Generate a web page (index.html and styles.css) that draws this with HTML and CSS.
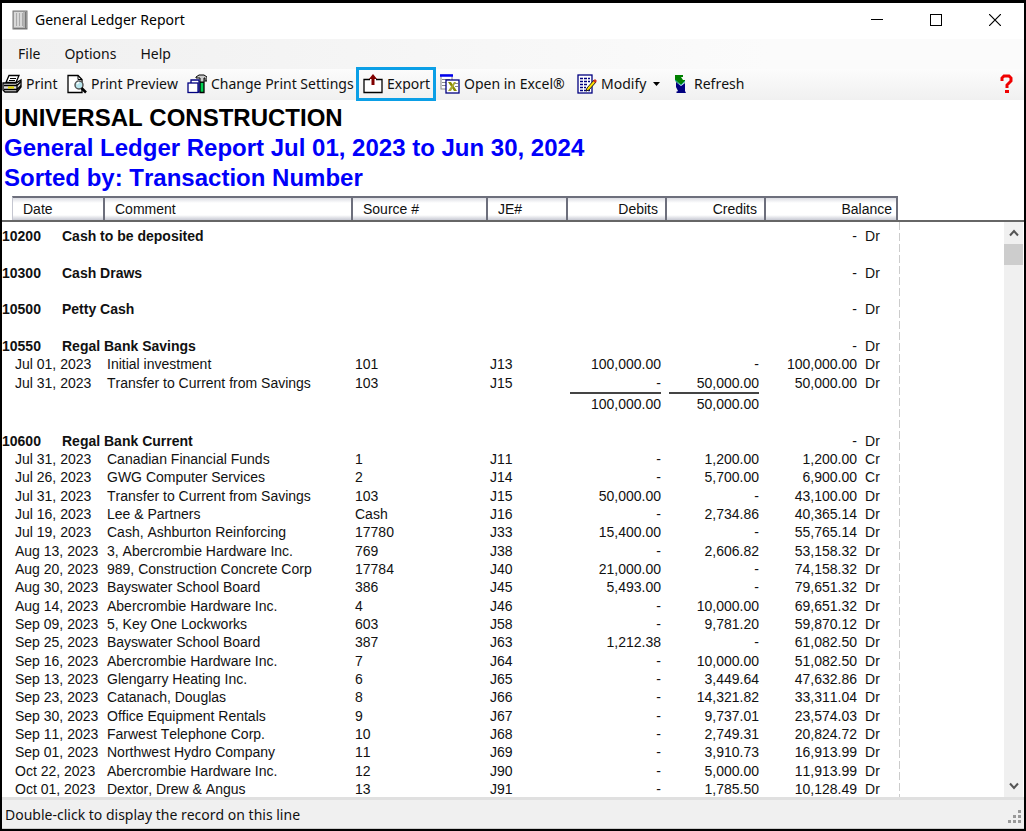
FILE: index.html
```html
<!DOCTYPE html>
<html lang="en">
<head>
  <meta charset="UTF-8" />
  <meta name="viewport" content="width=device-width, initial-scale=1" />
  <title>General Ledger Report</title>
  <link rel="stylesheet" href="styles.css">
</head>
<body>
  <div class="window">

    <header class="titlebar">
      <svg class="app-icon" width="16" height="20" viewBox="0 0 16 20">
        <rect x="1" y="1" width="14" height="18" fill="#b4b4b4" stroke="#777"/>
        <rect x="2" y="2" width="9" height="15" fill="#d8d8d8"/>
        <path d="M4.500 3v13M7.500 3v13M10.500 3v13" stroke="#aaa"/>
        <path d="M13.500 2v17M2 18.500h13" stroke="#777"/>
      </svg>
      <span class="title">General Ledger Report</span>
      <div class="window-buttons">
        <button aria-label="Minimize"><svg width="12" height="12" viewBox="0 0 12 12"><path d="M0 5.500h12" stroke="#000"/></svg></button>
        <button aria-label="Maximize"><svg width="12" height="12" viewBox="0 0 12 12"><rect x=".5" y=".5" width="11" height="11" fill="none" stroke="#000"/></svg></button>
        <button aria-label="Close"><svg width="12" height="12" viewBox="0 0 12 12"><path d="M0 0l12 12M12 0L0 12" stroke="#000" stroke-width="1.200"/></svg></button>
      </div>
    </header>

    <nav class="menubar">
      <button>File</button>
      <button>Options</button>
      <button>Help</button>
    </nav>

    <div class="toolbar">
      <button class="tool">
        <svg width="20" height="20" viewBox="0 0 20 20">
          <path d="M7 1.500h10l-3 7H4z" fill="#fff" stroke="#000" stroke-width="1.300"/>
          <path d="M8 4.500h6M7 6.500h6" stroke="#000"/>
          <path d="M1 9h13l5-3v7l-4 5H3l-2-2z" fill="#ddd" stroke="#000" stroke-width="1.300"/>
          <path d="M2 11.500h13l4-4M2 15.500h13l4-4M15 10v8" fill="none" stroke="#000" stroke-width="1.300"/>
          <path d="M6 13.500h6" stroke="#e5d800" stroke-width="2"/>
        </svg>
        Print
      </button>
      <button class="tool">
        <svg width="20" height="20" viewBox="0 0 20 20">
          <path d="M1 1.500h10l4 4V18.500H1z" fill="#fff" stroke="#000" stroke-width="1.300"/>
          <path d="M11 1.500v4h4" fill="none" stroke="#000"/>
          <circle cx="12" cy="11" r="4" fill="#b9e6ee" stroke="#555" stroke-width="1.500"/>
          <path d="M10 10l2-2" stroke="#fff" stroke-width="1.500"/>
          <path d="M14.500 14l4.500 4.500" stroke="#000" stroke-width="2.500"/>
        </svg>
        Print Preview
      </button>
      <button class="tool">
        <svg width="20" height="20" viewBox="0 0 20 20">
          <path d="M13 8h4v10.500h-4z" fill="#00d050" stroke="#000" stroke-width="1.300"/>
          <path d="M9 3l3-2h5l3 2v4h-2V4h-1v4h-4V4H9z" fill="#ccc" stroke="#000"/>
          <path d="M4 9V6h8v12h-2" fill="#fff" stroke="#000080" stroke-width="1.300"/>
          <rect x="1" y="9" width="10" height="9.500" fill="#fff" stroke="#000080" stroke-width="1.300"/>
        </svg>
        Change Print Settings
      </button>
      <button class="tool export">
        <svg width="20" height="20" viewBox="0 0 20 20">
          <path d="M7 5.500H1V18.500H19V5.500h-6" fill="#fff" stroke="#000" stroke-width="1.300"/>
          <path d="M10 0l4 5h-2.500v6h-3V5H6z" fill="#800000"/>
        </svg>
        Export
      </button>
      <button class="tool">
        <svg width="20" height="20" viewBox="0 0 20 20">
          <rect x="1" y="1" width="11" height="14" fill="#fff" stroke="#888"/>
          <path d="M0 1.500h13" stroke="#0000f0" stroke-width="2.500"/>
          <path d="M2 5.500h8M2 8.500h5M2 11.500h5" stroke="#888"/>
          <rect x="6" y="6" width="13" height="13" fill="#fff" stroke="#000080" stroke-width="1.300"/>
          <path d="M8 8h3l6 9h-3z" fill="#8a8a00"/>
          <path d="M16 8h-2l-6 9h3z" fill="#a8a830"/>
          <path d="M15 9.500h3M15 12.500h3" stroke="#888"/>
        </svg>
        Open in Excel®
      </button>
      <button class="tool">
        <svg width="20" height="20" viewBox="0 0 20 20">
          <rect x="1" y="1" width="14" height="18" fill="#fff" stroke="#000080" stroke-width="1.300"/>
          <path d="M3 4.500h10M3 7.500h10M3 10.500h8M3 13.500h6M3 16.500h10" stroke="#000080" stroke-width="1.500" stroke-dasharray="3 1"/>
          <path d="M17 6l2 2-7 8-3 1 1-3z" fill="#ffe000" stroke="#222"/>
          <path d="M16 7l2-2 2 2-2 2z" fill="#d03020"/>
        </svg>
        Modify
        <svg class="arrow" width="8" height="4" viewBox="0 0 8 4"><path d="M0 0h7L3.500 4z"/></svg>
      </button>
      <button class="tool refresh">
        <svg width="12" height="20" viewBox="0 0 12 20">
          <path d="M1 1h8v2H7l2 3h2v2l-4 3-5-3-1-2z" fill="#008000"/>
          <path d="M2 8l5 4 4-3v8l1 2H3l-1-1 2-1-2-4z" fill="#000080"/>
          <path d="M1 6l6 5 4-4" fill="none" stroke="#30b0b0"/>
        </svg>
        Refresh
      </button>
      <button class="help" aria-label="Help">
        <svg width="14" height="20" viewBox="0 0 14 20">
          <path d="M2 7V4l2-2h5l2 2v3l-4 4v3" fill="none" stroke="#f00000" stroke-width="3"/>
          <path d="M5 16h4v3H5z" fill="#f00000"/>
        </svg>
      </button>
    </div>

    <div class="headings">
      <h1>UNIVERSAL CONSTRUCTION</h1>
      <h2>General Ledger Report Jul 01, 2023 to Jun 30, 2024</h2>
      <h2>Sorted by: Transaction Number</h2>
    </div>

    <div class="columns">
      <span class="c-date">Date</span>
      <span class="c-comment">Comment</span>
      <span class="c-source">Source #</span>
      <span class="c-je">JE#</span>
      <span class="c-amount">Debits</span>
      <span class="c-amount">Credits</span>
      <span class="c-balance">Balance</span>
    </div>

    <main class="report">
      <div class="page">
        <table class="ledger">
          <colgroup>
            <col class="w-date"><col class="w-comment"><col class="w-source"><col class="w-je">
            <col class="w-debit"><col class="w-credit"><col class="w-balance"><col class="w-side">
          </colgroup>
          <tbody>
            <tr class="account"><th colspan="6"><span class="number">10200</span>Cash to be deposited</th><td>-</td><td>Dr</td></tr>
            <tr><td colspan="8"></td></tr>
            <tr class="account"><th colspan="6"><span class="number">10300</span>Cash Draws</th><td>-</td><td>Dr</td></tr>
            <tr><td colspan="8"></td></tr>
            <tr class="account"><th colspan="6"><span class="number">10500</span>Petty Cash</th><td>-</td><td>Dr</td></tr>
            <tr><td colspan="8"></td></tr>
            <tr class="account"><th colspan="6"><span class="number">10550</span>Regal Bank Savings</th><td>-</td><td>Dr</td></tr>
            <tr><td>Jul 01, 2023</td><td>Initial investment</td><td>101</td><td>J13</td><td>100,000.00</td><td>-</td><td>100,000.00</td><td>Dr</td></tr>
            <tr><td>Jul 31, 2023</td><td>Transfer to Current from Savings</td><td>103</td><td>J15</td><td>-</td><td>50,000.00</td><td>50,000.00</td><td>Dr</td></tr>
            <tr class="total"><td></td><td></td><td></td><td></td><td><span>100,000.00</span></td><td><span>50,000.00</span></td><td></td><td></td></tr>
            <tr><td colspan="8"></td></tr>
            <tr class="account"><th colspan="6"><span class="number">10600</span>Regal Bank Current</th><td>-</td><td>Dr</td></tr>
            <tr><td>Jul 31, 2023</td><td>Canadian Financial Funds</td><td>1</td><td>J11</td><td>-</td><td>1,200.00</td><td>1,200.00</td><td>Cr</td></tr>
            <tr><td>Jul 26, 2023</td><td>GWG Computer Services</td><td>2</td><td>J14</td><td>-</td><td>5,700.00</td><td>6,900.00</td><td>Cr</td></tr>
            <tr><td>Jul 31, 2023</td><td>Transfer to Current from Savings</td><td>103</td><td>J15</td><td>50,000.00</td><td>-</td><td>43,100.00</td><td>Dr</td></tr>
            <tr><td>Jul 16, 2023</td><td>Lee &amp; Partners</td><td>Cash</td><td>J16</td><td>-</td><td>2,734.86</td><td>40,365.14</td><td>Dr</td></tr>
            <tr><td>Jul 19, 2023</td><td>Cash, Ashburton Reinforcing</td><td>17780</td><td>J33</td><td>15,400.00</td><td>-</td><td>55,765.14</td><td>Dr</td></tr>
            <tr><td>Aug 13, 2023</td><td>3, Abercrombie Hardware Inc.</td><td>769</td><td>J38</td><td>-</td><td>2,606.82</td><td>53,158.32</td><td>Dr</td></tr>
            <tr><td>Aug 20, 2023</td><td>989, Construction Concrete Corp</td><td>17784</td><td>J40</td><td>21,000.00</td><td>-</td><td>74,158.32</td><td>Dr</td></tr>
            <tr><td>Aug 30, 2023</td><td>Bayswater School Board</td><td>386</td><td>J45</td><td>5,493.00</td><td>-</td><td>79,651.32</td><td>Dr</td></tr>
            <tr><td>Aug 14, 2023</td><td>Abercrombie Hardware Inc.</td><td>4</td><td>J46</td><td>-</td><td>10,000.00</td><td>69,651.32</td><td>Dr</td></tr>
            <tr><td>Sep 09, 2023</td><td>5, Key One Lockworks</td><td>603</td><td>J58</td><td>-</td><td>9,781.20</td><td>59,870.12</td><td>Dr</td></tr>
            <tr><td>Sep 25, 2023</td><td>Bayswater School Board</td><td>387</td><td>J63</td><td>1,212.38</td><td>-</td><td>61,082.50</td><td>Dr</td></tr>
            <tr><td>Sep 16, 2023</td><td>Abercrombie Hardware Inc.</td><td>7</td><td>J64</td><td>-</td><td>10,000.00</td><td>51,082.50</td><td>Dr</td></tr>
            <tr><td>Sep 13, 2023</td><td>Glengarry Heating Inc.</td><td>6</td><td>J65</td><td>-</td><td>3,449.64</td><td>47,632.86</td><td>Dr</td></tr>
            <tr><td>Sep 23, 2023</td><td>Catanach, Douglas</td><td>8</td><td>J66</td><td>-</td><td>14,321.82</td><td>33,311.04</td><td>Dr</td></tr>
            <tr><td>Sep 30, 2023</td><td>Office Equipment Rentals</td><td>9</td><td>J67</td><td>-</td><td>9,737.01</td><td>23,574.03</td><td>Dr</td></tr>
            <tr><td>Sep 11, 2023</td><td>Farwest Telephone Corp.</td><td>10</td><td>J68</td><td>-</td><td>2,749.31</td><td>20,824.72</td><td>Dr</td></tr>
            <tr><td>Sep 01, 2023</td><td>Northwest Hydro Company</td><td>11</td><td>J69</td><td>-</td><td>3,910.73</td><td>16,913.99</td><td>Dr</td></tr>
            <tr><td>Oct 22, 2023</td><td>Abercrombie Hardware Inc.</td><td>12</td><td>J90</td><td>-</td><td>5,000.00</td><td>11,913.99</td><td>Dr</td></tr>
            <tr><td>Oct 01, 2023</td><td>Dextor, Drew &amp; Angus</td><td>13</td><td>J91</td><td>-</td><td>1,785.50</td><td>10,128.49</td><td>Dr</td></tr>
          </tbody>
        </table>
      </div>
      <div class="scrollbar">
        <button aria-label="Scroll up"><svg width="10" height="8" viewBox="0 0 10 8"><path d="M1 6.500l4-4.500 4 4.500" fill="none" stroke="#555" stroke-width="2"/></svg></button>
        <div class="thumb"></div>
        <button aria-label="Scroll down"><svg width="10" height="8" viewBox="0 0 10 8"><path d="M1 1.500L5 6l4-4.500" fill="none" stroke="#555" stroke-width="2"/></svg></button>
      </div>
    </main>

    <footer class="statusbar">
      <span>Double-click to display the record on this line</span>
      <svg class="grip" width="14" height="14" viewBox="0 0 14 14" fill="#999">
        <path d="M10 0h3v3h-3zM10 5h3v3h-3zM5 5h3v3H5zM10 10h3v3h-3zM5 10h3v3H5zM0 10h3v3H0z"/>
      </svg>
    </footer>

  </div>
</body>
</html>
```
FILE: styles.css
```css
* { box-sizing: border-box; }
body {
  margin: 0;
  background: #000;
  color: #111;
  font-family: 'Noto Sans', 'Segoe UI', sans-serif;
  font-size: 14px;
  font-kerning: none;
}
button {
  margin: 0;
  padding: 0;
  background: none;
  border: none;
  color: inherit;
  font: inherit;
  font-kerning: none;
}
svg { display: block; flex: none; }

.window {
  display: flex;
  flex-direction: column;
  height: 100vh;
  border: 2px solid #000;
  border-top-width: 3px;
  background: #fff;
}

/* Title bar */
.titlebar {
  display: flex;
  align-items: center;
  height: 36px;
  padding-left: 10px;
  padding-bottom: 3px;
  color: #000;
}
.title { margin-left: 7px; }
.window-buttons {
  display: flex;
  margin-left: auto;
}
.window-buttons button {
  display: flex;
  justify-content: center;
  width: 59px;
}

/* Menu */
.menubar {
  display: flex;
  gap: 24px;
  height: 30px;
  padding-left: 16px;
  padding-bottom: 2px;
  background: linear-gradient(to right, #f0f0f0, #fbfbfb 75%);
}

/* Toolbar */
.toolbar {
  display: grid;
  grid-template-columns: 65px 120px 169px 84px 137px 97px 1fr 24px;
  grid-template-rows: 100%;
  align-items: center;
  height: 31px;
  padding-bottom: 2px;
  background: linear-gradient(#fcfcfc, #f0f0f0);
}
.tool {
  display: flex;
  align-items: center;
  gap: 4px;
  white-space: nowrap;
}
.refresh { gap: 8px; }
.export {
  width: 80px;
  height: 34px;
  padding-left: 4px;
  border: 3px solid #0b9fe6;
}
.arrow { margin-left: 3px; }

/* Report headings */
.headings {
  padding: 3px 2px;
  font-family: 'Liberation Sans', Arial, sans-serif;
}
h1, h2 {
  margin: 0;
  font-size: 24px;
  line-height: 30px;
  font-weight: bold;
}
h1 { color: #000; }
h2 { color: #0000fa; }

/* Column captions */
.columns {
  display: flex;
  padding-left: 10px;
  border-bottom: 2px solid #666;
  font-family: 'Liberation Sans', Arial, sans-serif;
  line-height: 22px;
}
.columns span {
  padding: 0 7px 0 10px;
  border: solid #6d6f7c;
  border-width: 2px 2px 0 0;
  background: linear-gradient(#dcdde4, #fff 5px, #fff 17px, #c8cad4);
}
.columns .c-date { width: 93px; border-left: 1px solid #c4c6d0; }
.c-comment { width: 248px; }
.c-source { width: 135px; }
.c-je { width: 80px; }
.c-amount { width: 99px; text-align: right; }
.columns .c-balance { width: 132px; padding-right: 4px; text-align: right; }

/* Report body */
.report {
  display: flex;
  flex: 1;
  min-height: 0;
  font-family: 'Liberation Sans', Arial, sans-serif;
}
.page {
  width: 898px;
  padding-top: 5px;
  overflow: hidden;
  background: repeating-linear-gradient(#ccc 0 8px, #fff 8px 11px) right / 1px 100% no-repeat;
}
.ledger {
  table-layout: fixed;
  width: 893px;
  border-collapse: collapse;
}
.ledger td, .ledger th {
  height: 18px;
  padding: 0;
  line-height: 18px;
  white-space: nowrap;
}
.ledger tr:nth-child(3n) > * { height: 19px; }
.w-date { width: 105px; }
.w-comment { width: 248px; }
.w-source { width: 135px; }
.w-je { width: 80px; }
.w-debit { width: 91px; }
.w-credit { width: 98px; }
.w-balance { width: 98px; }
.w-side { width: 38px; }
.ledger th { text-align: left; }
.number {
  display: inline-block;
  width: 60px;
}
.ledger td:first-child { padding-left: 13px; }
.ledger td:nth-child(n+5), .account td { text-align: right; }
.ledger td:last-child { padding-left: 8px; text-align: left; }
.ledger .total td { height: 21px; }
.total span {
  display: block;
  margin-left: 8px;
  padding-top: 1px;
  border-top: 2px solid #444;
}
.total td:nth-child(5) span { margin-left: 0; }

.scrollbar {
  display: flex;
  flex-direction: column;
  width: 19px;
  margin-left: auto;
  margin-right: 1px;
  background: #f0f0f0;
}
.scrollbar button {
  display: flex;
  align-items: center;
  justify-content: center;
  height: 22px;
}
.scrollbar button:last-child { margin-top: auto; }
.thumb {
  height: 21px;
  background: #cdcdcd;
}

/* Status bar */
.statusbar {
  display: flex;
  align-items: center;
  height: 32px;
  padding-left: 3px;
  border-top: 3px solid #e0e0e0;
  border-bottom: 1px solid #ccc;
  background: #f0f0f0;
}
.grip {
  align-self: flex-end;
  margin: 0 2px 4px auto;
}
```
